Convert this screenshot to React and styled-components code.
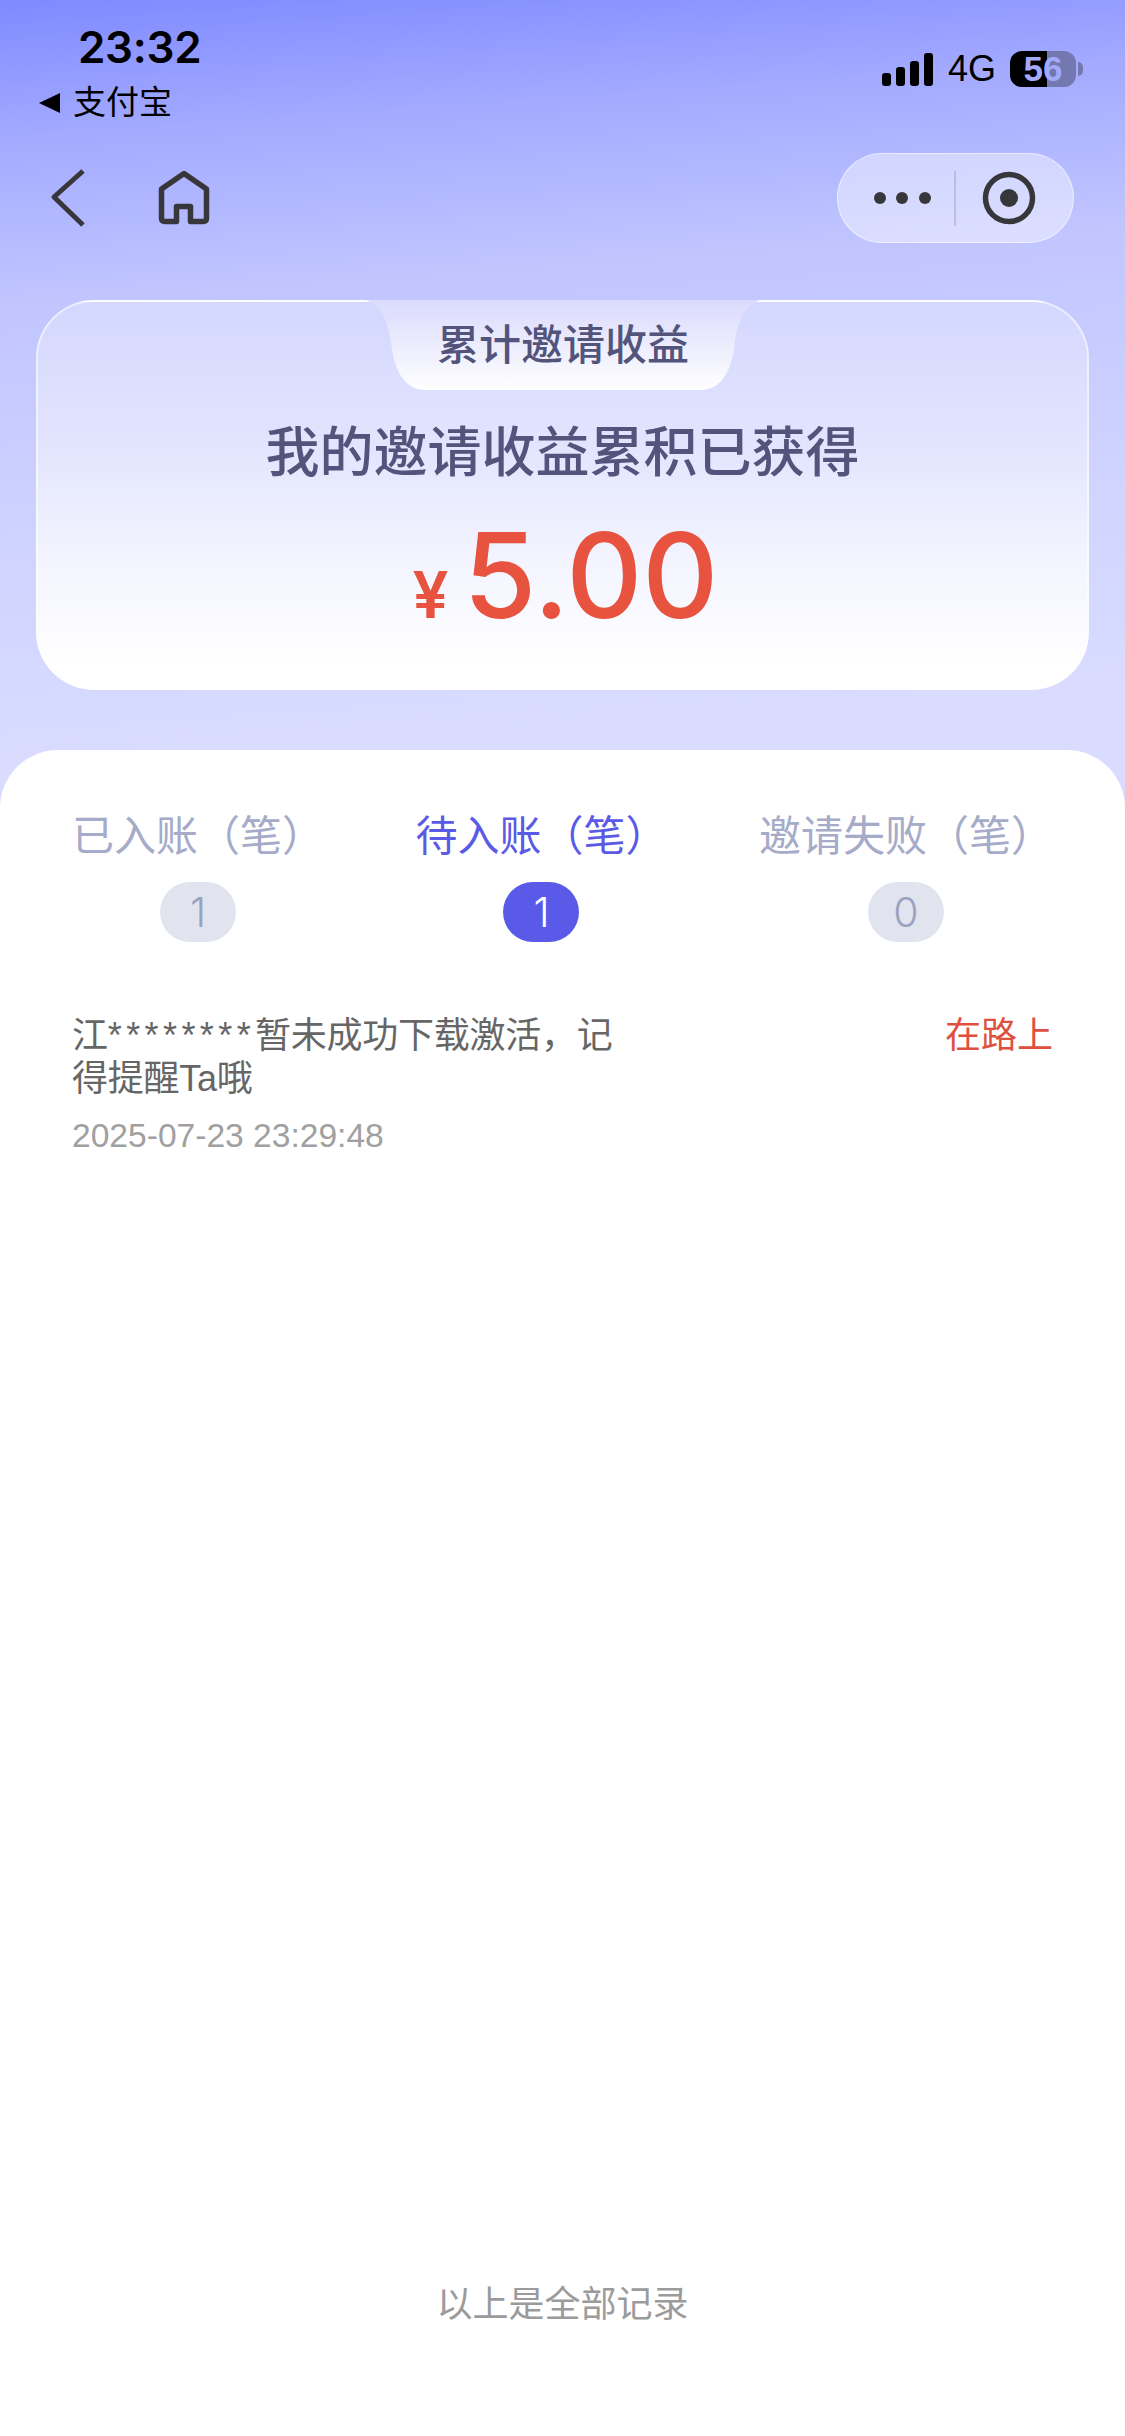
import React from "react";
import styled, { createGlobalStyle } from "styled-components";

const Global = createGlobalStyle`
  html, body { margin: 0; padding: 0; background: #fff; }
  body { font-family: "Liberation Sans", "Noto Sans CJK SC", sans-serif; }
  * { box-sizing: border-box; }
`;

const Page = styled.div`
  width: 1125px;
  height: 2436px;
  display: flex;
  flex-direction: column;
  overflow: hidden;
  background: linear-gradient(176deg, #7f8aff 0, #a3aaff 140px, #c0c5ff 300px, #d0d4ff 560px, #d9dcff 760px, #d9dcff 100%);
`;

const StatusBar = styled.div`
  display: flex;
  justify-content: space-between;
  align-items: flex-start;
  height: 153px;
  padding: 20px 49px 0 39px;
`;

const StatusLeft = styled.div`
  display: flex;
  flex-direction: column;
`;

const Time = styled.div`
  font-family: Inter, "Liberation Sans", sans-serif;
  font-weight: 600;
  font-size: 44px;
  line-height: 54px;
  color: #000;
  margin-left: 39px;
  letter-spacing: -0.3px;
`;

const BackApp = styled.div`
  display: flex;
  align-items: center;
  gap: 13px;
  margin-top: 9px;
  font-size: 33px;
  line-height: 40px;
  color: #000;
`;

const BackTriangle = styled.span`
  width: 0;
  height: 0;
  border-top: 10.5px solid transparent;
  border-bottom: 10.5px solid transparent;
  border-right: 21px solid #000;
`;

const StatusRight = styled.div`
  display: flex;
  align-items: center;
  margin-top: 31px;
`;

const SignalIcon = styled.svg`
  width: 52px;
  height: 33px;
  display: block;
`;

const Network = styled.span`
  font-size: 36px;
  line-height: 36px;
  color: #000;
  margin: 0 14px 0 14px;
`;

const Battery = styled.div`
  position: relative;
  width: 66px;
  height: 36px;
  border-radius: 12px;
  background: linear-gradient(90deg, #000 0, #000 56%, #7478b0 56%, #7478b0 100%);
  color: #a3a9fb;
  font-weight: 700;
  font-size: 35px;
  line-height: 36px;
  text-align: center;
  &::after {
    content: "";
    position: absolute;
    left: 68px;
    top: 11px;
    width: 5px;
    height: 14px;
    border-radius: 0 6px 6px 0;
    background: #7478b0;
  }
`;

const NavBar = styled.div`
  display: flex;
  align-items: center;
  justify-content: space-between;
  height: 90px;
  padding: 0 51px 0 50px;
`;

const NavLeft = styled.div`
  display: flex;
  align-items: center;
  gap: 69px;
`;

const NavIcon = styled.svg`
  display: block;
  color: #37373b;
`;

const Capsule = styled.div`
  display: flex;
  align-items: center;
  width: 237px;
  height: 90px;
  border-radius: 45px;
  border: 1.5px solid rgba(255, 255, 255, 0.55);
  background: rgba(255, 255, 255, 0.42);
`;

const CapsuleHalf = styled.div`
  flex: 0 0 ${(p) => p.$width}px;
  height: 100%;
  display: flex;
  align-items: center;
  justify-content: center;
  gap: 10.5px;
  padding: ${(p) => p.$pad};
`;

const Dot = styled.span`
  width: 12px;
  height: 12px;
  border-radius: 50%;
  background: #37373b;
`;

const CapsuleDivider = styled.span`
  width: 1.5px;
  height: 55px;
  background: rgba(90, 90, 110, 0.22);
`;

const Card = styled.section`
  position: relative;
  margin: 57px 36px 0;
  height: 390px;
  border-radius: 58px;
  border: 2px solid rgba(255, 255, 255, 0.55);
  border-bottom: none;
  background: linear-gradient(180deg, #d4d7fe 0, #e4e6fe 40%, #f3f4ff 66%, #fff 94%);
  display: flex;
  flex-direction: column;
  align-items: center;
  padding-top: 121px;
`;

const NotchTab = styled.div`
  position: absolute;
  top: -2px;
  left: 328px;
  width: 394px;
  height: 90px;
  display: flex;
  align-items: center;
  justify-content: center;
`;

const NotchShape = styled.svg`
  position: absolute;
  inset: 0;
  width: 394px;
  height: 90px;
`;

const NotchLabel = styled.span`
  position: relative;
  font-size: 42px;
  font-weight: 500;
  line-height: 46px;
  margin-top: 1px;
  color: #53547c;
`;

const Heading = styled.h1`
  margin: 0;
  font-size: 54px;
  font-weight: 500;
  line-height: 60px;
  color: #53547c;
`;

const Amount = styled.div`
  display: flex;
  align-items: baseline;
  gap: 15px;
  margin-top: 30px;
  padding-left: 6px;
  font-family: Inter, "Liberation Sans", sans-serif;
  color: #e8533f;
`;

const Currency = styled.span`
  font-size: 64px;
  font-weight: 600;
  line-height: 60px;
`;

const Value = styled.span`
  font-size: 118px;
  font-weight: 500;
  line-height: 124px;
`;

const Panel = styled.main`
  flex: 1;
  margin-top: 60px;
  border-radius: 58px 58px 0 0;
  background: #fff;
  display: flex;
  flex-direction: column;
  padding: 63px 72px 0;
`;

const Tabs = styled.div`
  display: flex;
  justify-content: space-between;
`;

const Tab = styled.div`
  display: flex;
  flex-direction: column;
  align-items: center;
  gap: 21px;
`;

const TabLabel = styled.span`
  font-size: 42px;
  line-height: 48px;
  color: ${(p) => (p.$active ? "#5a5ae6" : "#a5abc8")};
`;

const Count = styled.span`
  width: 76px;
  height: 60px;
  border-radius: 30px;
  display: flex;
  align-items: center;
  justify-content: center;
  font-family: Inter, "Liberation Sans", sans-serif;
  font-weight: 300;
  font-size: 41px;
  background: ${(p) => (p.$active ? "#5a5ae8" : "#e1e4ee")};
  color: ${(p) => (p.$active ? "#fff" : "#9aa2bf")};
`;

const Record = styled.div`
  display: flex;
  justify-content: space-between;
  align-items: flex-start;
  margin-top: 72px;
`;

const RecordBody = styled.div`
  width: 545px;
`;

const RecordText = styled.div`
  font-size: 36px;
  line-height: 43px;
  letter-spacing: -0.25px;
  color: #666;
`;

const Stars = styled.span`
  letter-spacing: 4.4px;
`;

const RecordTime = styled.div`
  margin-top: 17px;
  font-size: 33.6px;
  line-height: 38px;
  color: #a0a0a0;
`;

const RecordStatus = styled.div`
  font-size: 36px;
  line-height: 44px;
  color: #e0503f;
`;

const Footer = styled.div`
  margin-top: auto;
  padding-bottom: 109px;
  text-align: center;
  font-size: 36px;
  line-height: 44px;
  color: #9b9b9b;
`;

const tabs = [
  { label: "已入账（笔）", count: 1 },
  { label: "待入账（笔）", count: 1, active: true },
  { label: "邀请失败（笔）", count: 0 },
];

export default function App() {
  return (
    <Page>
      <Global />
      <StatusBar>
        <StatusLeft>
          <Time>23:32</Time>
          <BackApp>
            <BackTriangle />
            支付宝
          </BackApp>
        </StatusLeft>
        <StatusRight>
          <SignalIcon viewBox="0 0 52 33">
            <rect x="0" y="20" width="9" height="13" rx="3" fill="#000" />
            <rect x="14" y="14" width="9" height="19" rx="3" fill="#000" />
            <rect x="28" y="8" width="9" height="25" rx="3" fill="#000" />
            <rect x="42" y="0" width="9" height="33" rx="3" fill="#000" />
          </SignalIcon>
          <Network>4G</Network>
          <Battery>56</Battery>
        </StatusRight>
      </StatusBar>
      <NavBar>
        <NavLeft>
          <NavIcon width="38" height="60" viewBox="0 0 38 60" fill="none">
            <path d="M33 3 L4 29 L33 57" stroke="currentColor" strokeWidth="5" strokeLinejoin="round" />
          </NavIcon>
          <NavIcon width="54" height="56" viewBox="0 0 54 56" fill="none">
            <path
              d="M19.5 51.5 V36.5 H33.5 V51.5 H46 Q49.5 51.5 49.5 48 V19 L27 3.5 L4.5 19 V48 Q4.5 51.5 8 51.5 Z"
              stroke="currentColor"
              strokeWidth="5.5"
              strokeLinejoin="round"
            />
          </NavIcon>
        </NavLeft>
        <Capsule>
          <CapsuleHalf $width={116} $pad="0 0 0 12px">
            <Dot />
            <Dot />
            <Dot />
          </CapsuleHalf>
          <CapsuleDivider />
          <CapsuleHalf $width={116} $pad="0 10px 0 0">
            <NavIcon width="54" height="54" viewBox="0 0 54 54" fill="none">
              <circle cx="27" cy="27" r="23.5" stroke="currentColor" strokeWidth="5.5" />
              <circle cx="27" cy="27" r="9" fill="currentColor" />
            </NavIcon>
          </CapsuleHalf>
        </Capsule>
      </NavBar>
      <Card>
        <NotchTab>
          <NotchShape viewBox="0 0 394 90">
            <defs>
              <linearGradient id="notch" x1="0" y1="0" x2="0" y2="1">
                <stop offset="0" stopColor="#dadafd" />
                <stop offset="1" stopColor="#ffffff" />
              </linearGradient>
            </defs>
            <path
              d="M0 0 C16 6 22 22 25 42 C28 70 38 90 60 90 L334 90 C356 90 366 70 369 42 C372 22 378 6 394 0 Z"
              fill="url(#notch)"
            />
          </NotchShape>
          <NotchLabel>累计邀请收益</NotchLabel>
        </NotchTab>
        <Heading>我的邀请收益累积已获得</Heading>
        <Amount>
          <Currency>¥</Currency>
          <Value>5.00</Value>
        </Amount>
      </Card>
      <Panel>
        <Tabs>
          {tabs.map((t) => (
            <Tab key={t.label}>
              <TabLabel $active={t.active}>{t.label}</TabLabel>
              <Count $active={t.active}>{t.count}</Count>
            </Tab>
          ))}
        </Tabs>
        <Record>
          <RecordBody>
            <RecordText>
              江<Stars>********</Stars>暂未成功下载激活，记得提醒Ta哦
            </RecordText>
            <RecordTime>2025-07-23 23:29:48</RecordTime>
          </RecordBody>
          <RecordStatus>在路上</RecordStatus>
        </Record>
        <Footer>以上是全部记录</Footer>
      </Panel>
    </Page>
  );
}
